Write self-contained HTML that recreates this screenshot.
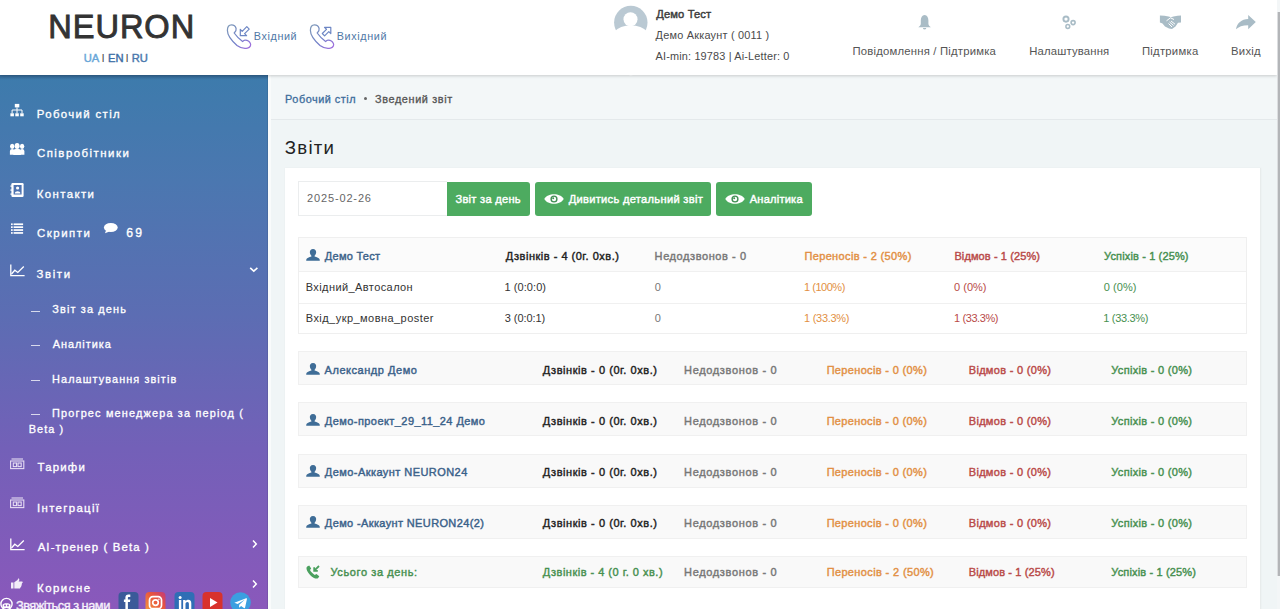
<!DOCTYPE html>
<html><head><meta charset="utf-8"><title>NEURON</title><style>
*{box-sizing:border-box;margin:0;padding:0}
html,body{width:1280px;height:609px;overflow:hidden}
body{position:relative;background:#f0f5f6;font-family:"Liberation Sans",sans-serif}
.t{position:absolute;white-space:nowrap}
.a{position:absolute}
svg{position:absolute;overflow:visible}
</style></head><body>
<div class="a" style="left:271px;top:75px;width:1007px;height:45px;background:#f3f7f8;border-bottom:1px solid #e4e9eb"></div>
<div class="a" style="left:285px;top:168px;width:976px;height:460px;background:#fff;border-right:1px solid #e8ecec;box-shadow:0 0 2px rgba(0,0,0,.04)"></div>
<div class="a" style="left:298px;top:181px;width:149px;height:35px;background:#fff;border:1px solid #ebedee;border-right:none"></div>
<div class="a" style="left:447px;top:181.5px;width:83px;height:34.5px;background:#4dab60;border-radius:0 3px 3px 0"></div>
<div class="a" style="left:534.5px;top:181.5px;width:176.5px;height:34.5px;background:#4dab60;border-radius:3px"></div>
<div class="a" style="left:715.5px;top:181.5px;width:96px;height:34.5px;background:#4dab60;border-radius:3px"></div>
<svg style="left:544px;top:192.5px" width="20" height="12" viewBox="0 0 20 12"><path d="M0.3 6 C3.5 -0.3 16.5 -0.3 19.7 6 C16.5 12.3 3.5 12.3 0.3 6 Z" fill="#fff"/><circle cx="10" cy="6" r="3.6" fill="#3f8f52"/><circle cx="10" cy="6" r="2.2" fill="#fff"/><circle cx="9.2" cy="5.2" r="1" fill="#3f8f52"/></svg>
<svg style="left:724.5px;top:192.5px" width="20" height="12" viewBox="0 0 20 12"><path d="M0.3 6 C3.5 -0.3 16.5 -0.3 19.7 6 C16.5 12.3 3.5 12.3 0.3 6 Z" fill="#fff"/><circle cx="10" cy="6" r="3.6" fill="#3f8f52"/><circle cx="10" cy="6" r="2.2" fill="#fff"/><circle cx="9.2" cy="5.2" r="1" fill="#3f8f52"/></svg>
<div class="a" style="left:298px;top:237px;width:949px;height:97px;background:#fff;border:1px solid #efefef"></div>
<div class="a" style="left:299px;top:238px;width:947px;height:34px;background:#fbfbfb;border-bottom:1px solid #f0f0f0"></div>
<div class="a" style="left:299px;top:302.5px;width:947px;height:1px;background:#f0f0f0"></div>
<div class="a" style="left:298px;top:351.3px;width:949px;height:34px;background:#f9f9f9;border:1px solid #f0f0f0"></div>
<div class="a" style="left:298px;top:402.3px;width:949px;height:34px;background:#f9f9f9;border:1px solid #f0f0f0"></div>
<div class="a" style="left:298px;top:453.5px;width:949px;height:34px;background:#f9f9f9;border:1px solid #f0f0f0"></div>
<div class="a" style="left:298px;top:504.6px;width:949px;height:34px;background:#f9f9f9;border:1px solid #f0f0f0"></div>
<div class="a" style="left:298px;top:556px;width:949px;height:32px;background:#f9f9f9;border:1px solid #f0f0f0"></div>
<svg style="left:306px;top:249.2px" width="14" height="12" viewBox="0 0 14 12"><path d="M7 0 C4.6 0 3.6 1.8 3.9 3.8 C4.1 5.2 4.8 6.3 5.4 6.8 L5.4 7.5 C3.2 8.2 0.6 9.2 0.3 10.6 L0.2 11.8 L13.8 11.8 L13.7 10.6 C13.4 9.2 10.8 8.2 8.6 7.5 L8.6 6.8 C9.2 6.3 9.9 5.2 10.1 3.8 C10.4 1.8 9.4 0 7 0 Z" fill="#3f6d97"/></svg>
<svg style="left:306px;top:362.8px" width="14" height="12" viewBox="0 0 14 12"><path d="M7 0 C4.6 0 3.6 1.8 3.9 3.8 C4.1 5.2 4.8 6.3 5.4 6.8 L5.4 7.5 C3.2 8.2 0.6 9.2 0.3 10.6 L0.2 11.8 L13.8 11.8 L13.7 10.6 C13.4 9.2 10.8 8.2 8.6 7.5 L8.6 6.8 C9.2 6.3 9.9 5.2 10.1 3.8 C10.4 1.8 9.4 0 7 0 Z" fill="#3f6d97"/></svg>
<svg style="left:306px;top:413.8px" width="14" height="12" viewBox="0 0 14 12"><path d="M7 0 C4.6 0 3.6 1.8 3.9 3.8 C4.1 5.2 4.8 6.3 5.4 6.8 L5.4 7.5 C3.2 8.2 0.6 9.2 0.3 10.6 L0.2 11.8 L13.8 11.8 L13.7 10.6 C13.4 9.2 10.8 8.2 8.6 7.5 L8.6 6.8 C9.2 6.3 9.9 5.2 10.1 3.8 C10.4 1.8 9.4 0 7 0 Z" fill="#3f6d97"/></svg>
<svg style="left:306px;top:465.0px" width="14" height="12" viewBox="0 0 14 12"><path d="M7 0 C4.6 0 3.6 1.8 3.9 3.8 C4.1 5.2 4.8 6.3 5.4 6.8 L5.4 7.5 C3.2 8.2 0.6 9.2 0.3 10.6 L0.2 11.8 L13.8 11.8 L13.7 10.6 C13.4 9.2 10.8 8.2 8.6 7.5 L8.6 6.8 C9.2 6.3 9.9 5.2 10.1 3.8 C10.4 1.8 9.4 0 7 0 Z" fill="#3f6d97"/></svg>
<svg style="left:306px;top:516.1px" width="14" height="12" viewBox="0 0 14 12"><path d="M7 0 C4.6 0 3.6 1.8 3.9 3.8 C4.1 5.2 4.8 6.3 5.4 6.8 L5.4 7.5 C3.2 8.2 0.6 9.2 0.3 10.6 L0.2 11.8 L13.8 11.8 L13.7 10.6 C13.4 9.2 10.8 8.2 8.6 7.5 L8.6 6.8 C9.2 6.3 9.9 5.2 10.1 3.8 C10.4 1.8 9.4 0 7 0 Z" fill="#3f6d97"/></svg>
<svg style="left:305.8px;top:564.5px" width="14" height="14" viewBox="0 0 14 14"><path d="M3.2 0.6 L1.2 1.6 C0.2 2.4 0.3 4.2 1.2 6 C2.6 8.8 5.2 11.6 8 13 C9.8 13.8 11.4 13.8 12.2 13 L13.3 11.2 L10.4 8.9 L8.8 10 C7.2 9.3 4.8 6.8 4 5.1 L5.2 3.5 Z" fill="#4aa05e"/><path d="M13 1 L8.6 5.4 M8.2 2.2 L8.2 5.8 L11.8 5.8" stroke="#4aa05e" stroke-width="1.8" fill="none"/></svg>
<div class="a" style="left:0;top:75px;width:268px;height:534px;background:linear-gradient(180deg,#3d7bac 0%,#4b77b0 20%,#5c6db3 45%,#7360b8 70%,#8a58bb 100%)"></div>
<div class="a" style="left:268px;top:75px;width:3px;height:534px;background:#f9fbfb"></div>
<div class="a" style="left:0;top:75px;width:268px;height:5px;background:linear-gradient(180deg,rgba(20,40,70,.28),rgba(20,40,70,0))"></div>
<div class="a" style="left:266.5px;top:75px;width:1.5px;height:534px;background:rgba(20,30,60,.12)"></div>
<div class="a" style="left:0;top:0;width:1277px;height:75px;background:#fff;box-shadow:0 1px 3px rgba(0,0,0,.18)"></div>
<div class="a" style="left:1277px;top:0;width:3px;height:609px;background:#f3f6f7"></div>
<div class="a" style="left:1277.4px;top:12px;width:0.8px;height:564px;background:#dcdee0"></div>
<div class="a" style="left:1278px;top:12px;width:2px;height:564px;background:#b3b5b8"></div>
<svg style="left:222px;top:20px" width="34" height="32" viewBox="0 0 34 32"><defs><linearGradient id="g222" x1="0" y1="0" x2="1" y2="1"><stop offset="0" stop-color="#7f9ab8"/><stop offset="0.55" stop-color="#6f7fc8"/><stop offset="1" stop-color="#a56ee0"/></linearGradient></defs><path d="M9.5 4.8 C7 4.8 5.4 7 5.4 10.5 C5.4 15 10 21 15 25.5 C19 28.5 23 28.6 25.5 28.1 C28.4 27.5 29.1 25 28.4 23.4 C27.5 21.5 25 20 23 20.1 C22 20.2 21.2 20.9 20.6 21.5 C17 19 14.3 16 12.2 13 C13.2 12 14.6 10.5 14.1 8.5 C13.6 6.5 11.6 4.8 9.5 4.8 Z" fill="none" stroke="url(#g222)" stroke-width="1.25"/><path d="M18.3 9.3 L18.3 15.7 L24.6 15.7 L22.6 13.7 L27.2 9.1 L24.8 6.7 L20.2 11.3 Z" fill="none" stroke="#6d86c4" stroke-width="1.2" stroke-linejoin="round"/></svg>
<svg style="left:305px;top:20px" width="34" height="32" viewBox="0 0 34 32"><defs><linearGradient id="g305" x1="0" y1="0" x2="1" y2="1"><stop offset="0" stop-color="#7f9ab8"/><stop offset="0.55" stop-color="#6f7fc8"/><stop offset="1" stop-color="#a56ee0"/></linearGradient></defs><path d="M9.5 4.8 C7 4.8 5.4 7 5.4 10.5 C5.4 15 10 21 15 25.5 C19 28.5 23 28.6 25.5 28.1 C28.4 27.5 29.1 25 28.4 23.4 C27.5 21.5 25 20 23 20.1 C22 20.2 21.2 20.9 20.6 21.5 C17 19 14.3 16 12.2 13 C13.2 12 14.6 10.5 14.1 8.5 C13.6 6.5 11.6 4.8 9.5 4.8 Z" fill="none" stroke="url(#g305)" stroke-width="1.25"/><path d="M25.8 7.4 L25.8 13.6 L23.8 11.6 L19.6 15.8 L17.3 13.5 L21.5 9.3 L19.5 7.4 Z" fill="none" stroke="#6d86c4" stroke-width="1.2" stroke-linejoin="round"/></svg>
<svg style="left:608px;top:0px" width="48" height="44" viewBox="0 0 48 44"><defs><clipPath id="av"><circle cx="22.8" cy="22.5" r="16.7"/></clipPath></defs><circle cx="22.8" cy="22.5" r="16.7" fill="#bac9d3"/><circle cx="22.5" cy="19.3" r="7" fill="#fff"/><circle cx="22.8" cy="50.2" r="25" fill="#fff"/></svg>
<svg style="left:912px;top:10px" width="28" height="24" viewBox="0 0 28 24"><path d="M12.6 4.9 C10 5.3 8.8 7.5 8.8 10.5 L8.8 13.8 C8.8 15.4 7.6 16.4 6.3 17.3 L18.9 17.3 C17.6 16.4 16.4 15.4 16.4 13.8 L16.4 10.5 C16.4 7.5 15.2 5.3 12.6 4.9 Z" fill="#a9bcc6"/><path d="M11 18 C11 19.2 11.8 19.4 12.6 19.4 C13.4 19.4 14.2 19.2 14.2 18 Z" fill="#a9bcc6"/></svg>
<svg style="left:1056px;top:10px" width="28" height="24" viewBox="0 0 28 24"><circle cx="10" cy="9.1" r="2.6" fill="none" stroke="#a9bcc6" stroke-width="1.9"/><circle cx="17.1" cy="12.6" r="2" fill="none" stroke="#a9bcc6" stroke-width="1.6"/><circle cx="11.8" cy="16.5" r="1.9" fill="none" stroke="#a9bcc6" stroke-width="1.5"/></svg>
<svg style="left:1156px;top:10px" width="30" height="24" viewBox="0 0 30 24"><path d="M3.9 5.5 L8.5 5.8 L12.5 6.4 L15 7.2 L17.5 6.4 L21.5 5.8 L25 5.5 L25 12.5 L22 12.8 L19.5 16.5 L16 18.9 L13 18.5 L9 16.5 L6.5 13.5 L3.9 12.5 Z" fill="#a9bcc6"/><path d="M10.5 10.8 L14.5 7.8 L18 9.5 M13.5 12 L17.5 15.5 M12.5 13.5 L16 17 M15 11 L19 14.2" stroke="#fff" stroke-width="1" fill="none"/></svg>
<svg style="left:1232px;top:10px" width="30" height="24" viewBox="0 0 30 24"><path d="M16.2 4.9 L23.8 12 L16.2 19.3 L16.2 15.2 C10.5 15.2 6.5 16.8 4 19.3 C5 13 9.5 9.3 16.2 9 Z" fill="#a9bcc6"/></svg>
<svg style="left:0;top:95px" width="30" height="30" viewBox="0 0 30 30"><rect x="14.8" y="8.9" width="4.5" height="3.5" fill="#ffffff"/><path d="M17 12.4 L17 15 M12.1 18.3 L12.1 15 L22 15 L22 18.3 M17 15 L17 18.3" stroke="#ffffff" stroke-width="1" fill="none"/><rect x="10.4" y="18.3" width="3.5" height="3" fill="#ffffff"/><rect x="15.3" y="18.3" width="3.5" height="3" fill="#ffffff"/><rect x="20.2" y="18.3" width="3.5" height="3" fill="#ffffff"/></svg>
<svg style="left:0;top:135px" width="30" height="30" viewBox="0 0 30 30"><g fill="#ffffff"><ellipse cx="12.2" cy="11.3" rx="2.2" ry="2.6"/><ellipse cx="22.1" cy="11.3" rx="2.2" ry="2.6"/><path d="M9.9 19.8 L9.9 16.5 C9.9 14.8 11 14 12.2 14 C13.4 14 14.5 14.8 14.5 16.5 L14.5 19.8 Z"/><path d="M19.8 19.8 L19.8 16.5 C19.8 14.8 20.9 14 22.1 14 C23.3 14 24.4 14.8 24.4 16.5 L24.4 19.8 Z"/><ellipse cx="17.1" cy="11" rx="2.5" ry="2.9"/><path d="M13.3 20 L13.3 16.5 C13.3 14.5 15 13.8 17.1 13.8 C19.2 13.8 20.9 14.5 20.9 16.5 L20.9 20 Z"/></g></svg>
<svg style="left:0;top:175px" width="30" height="30" viewBox="0 0 30 30"><rect x="11.4" y="8" width="12.2" height="14" rx="1.2" fill="#ffffff"/><rect x="13.6" y="10" width="8" height="9.5" fill="#4d73b1"/><circle cx="17.6" cy="13" r="1.6" fill="#ffffff"/><path d="M14.8 18.6 C14.8 15.6 20.4 15.6 20.4 18.6 Z" fill="#ffffff"/><rect x="10.4" y="10.5" width="2" height="1.2" fill="#ffffff"/><rect x="10.4" y="14.5" width="2" height="1.2" fill="#ffffff"/><rect x="10.4" y="18.5" width="2" height="1.2" fill="#ffffff"/></svg>
<svg style="left:0;top:215px" width="30" height="30" viewBox="0 0 30 30"><g fill="#ffffff"><rect x="11" y="8.4" width="1.7" height="1.7"/><rect x="13.6" y="8.4" width="9.5" height="1.7"/><rect x="11" y="11.3" width="1.7" height="1.7"/><rect x="13.6" y="11.3" width="9.5" height="1.7"/><rect x="11" y="14.2" width="1.7" height="1.7"/><rect x="13.6" y="14.2" width="9.5" height="1.7"/><rect x="11" y="17.1" width="1.7" height="1.7"/><rect x="13.6" y="17.1" width="9.5" height="1.7"/></g></svg>
<svg style="left:100px;top:220px" width="20" height="16" viewBox="0 0 20 16"><ellipse cx="10.8" cy="7.5" rx="6.9" ry="4.6" fill="#ffffff"/><path d="M6 10.5 L5 13.2 L9.5 11.5 Z" fill="#ffffff"/></svg>
<svg style="left:9.5px;top:263.5px" width="20" height="16" viewBox="0 0 20 16"><path d="M0.8 0.5 L0.8 11.6 L14.6 11.6" stroke="#ffffff" stroke-width="1.3" fill="none"/><path d="M1.5 10 L4.8 6.2 L7.8 8.5 L13.8 2.5" stroke="#ffffff" stroke-width="1.3" fill="none"/></svg>
<svg style="left:9.5px;top:537.5px" width="20" height="16" viewBox="0 0 20 16"><path d="M0.8 0.5 L0.8 11.6 L14.6 11.6" stroke="#ffffff" stroke-width="1.3" fill="none"/><path d="M1.5 10 L4.8 6.2 L7.8 8.5 L13.8 2.5" stroke="#ffffff" stroke-width="1.3" fill="none"/></svg>
<svg style="left:248px;top:265px" width="12" height="10" viewBox="0 0 12 10"><path d="M2.2 2.8 L5.8 6.2 L9.4 2.8" stroke="#ffffff" stroke-width="1.6" fill="none"/></svg>
<svg style="left:250px;top:537.5px" width="10" height="12" viewBox="0 0 10 12"><path d="M3 2.5 L6.3 6 L3 9.5" stroke="#ffffff" stroke-width="1.5" fill="none"/></svg>
<svg style="left:250px;top:577.5px" width="10" height="12" viewBox="0 0 10 12"><path d="M3 2.5 L6.3 6 L3 9.5" stroke="#ffffff" stroke-width="1.5" fill="none"/></svg>
<div class="a" style="left:31px;top:310.5px;width:9px;height:1px;background:rgba(255,255,255,.75)"></div>
<div class="a" style="left:31px;top:344.5px;width:9px;height:1px;background:rgba(255,255,255,.75)"></div>
<div class="a" style="left:31px;top:379.5px;width:9px;height:1px;background:rgba(255,255,255,.75)"></div>
<div class="a" style="left:31px;top:413.5px;width:9px;height:1px;background:rgba(255,255,255,.75)"></div>
<svg style="left:10px;top:457.5px" width="16" height="12" viewBox="0 0 16 12"><g fill="none" stroke="#e6dcf3" stroke-width="1.1"><rect x="0.6" y="3" width="13.2" height="7.6"/><path d="M1.5 1 L13 1"/><rect x="3.3" y="5" width="3.2" height="3.6"/><rect x="8" y="5" width="3.2" height="3.6"/></g></svg>
<svg style="left:10px;top:496.8px" width="16" height="12" viewBox="0 0 16 12"><g fill="none" stroke="#e6dcf3" stroke-width="1.1"><rect x="0.6" y="3" width="13.2" height="7.6"/><path d="M1.5 1 L13 1"/><rect x="3.3" y="5" width="3.2" height="3.6"/><rect x="8" y="5" width="3.2" height="3.6"/></g></svg>
<svg style="left:10px;top:578px" width="14" height="12" viewBox="0 0 14 12"><path d="M1 4.5 L3.5 4.5 L3.5 10.5 L1 10.5 Z M4.3 4.3 L7.5 2 L8.2 0.6 C9 0.4 9.6 1 9.2 2.4 L8.6 3.6 L12 3.6 C13 3.8 13 5 12 5.2 L11.5 5.2 C12.3 5.5 12.2 6.5 11.4 6.6 C12 7 11.8 8 11 8 C11.5 8.4 11.2 9.3 10.5 9.3 L10.3 9.3 C10.5 9.8 10.2 10.6 9.5 10.6 L4.3 10.6 Z" fill="#f2ecf8"/></svg>
<svg style="left:0;top:596px" width="14" height="14" viewBox="0 0 14 14"><circle cx="6.5" cy="8" r="5.6" fill="none" stroke="#fff" stroke-width="1.4"/><path d="M2.5 9 C2.5 6.8 10.5 6.8 10.5 9 L10.5 12 L2.5 12 Z" fill="#fff"/><circle cx="5" cy="9.5" r="0.9" fill="#8a55bd"/><circle cx="8" cy="9.5" r="0.9" fill="#8a55bd"/></svg>
<svg style="left:117.8px;top:592px" width="21" height="21" viewBox="0 0 20 21"><rect x="0" y="0" width="20" height="21" rx="4" fill="#3b5a99"/><path d="M11.8 5 L10.2 5 C9.6 5 9.4 5.4 9.4 6 L9.4 7.6 L11.8 7.6 L11.5 10 L9.4 10 L9.4 20 L6.9 20 L6.9 10 L5.4 10 L5.4 7.6 L6.9 7.6 L6.9 5.6 C6.9 3.6 8 2.6 9.8 2.6 L11.8 2.6 Z" fill="#fff"/></svg>
<svg style="left:145.3px;top:592px" width="21" height="21" viewBox="0 0 20 21"><defs><linearGradient id="ig" x1="0" y1="1" x2="1" y2="0"><stop offset="0" stop-color="#f6a03c"/><stop offset="0.6" stop-color="#e8543f"/><stop offset="1" stop-color="#c33a7a"/></linearGradient></defs><rect x="0" y="0" width="20" height="21" rx="4" fill="url(#ig)"/><rect x="4" y="4.6" width="12" height="12" rx="3.4" fill="none" stroke="#fff" stroke-width="1.7"/><circle cx="10" cy="10.6" r="2.8" fill="none" stroke="#fff" stroke-width="1.7"/><circle cx="13.4" cy="7.2" r="0.8" fill="#fff"/></svg>
<svg style="left:173.6px;top:592px" width="21" height="21" viewBox="0 0 20 21"><rect x="0" y="0" width="20" height="21" rx="4" fill="#2f6eb5"/><rect x="4.4" y="8" width="2.4" height="9" fill="#fff"/><circle cx="5.6" cy="5.4" r="1.5" fill="#fff"/><path d="M8.6 8 L11 8 L11 9.3 C11.6 8.3 12.6 7.8 13.8 7.8 C15.8 7.8 16.8 9 16.8 11.4 L16.8 17 L14.4 17 L14.4 12 C14.4 10.8 14 10 12.9 10 C11.8 10 11 10.8 11 12 L11 17 L8.6 17 Z" fill="#fff"/></svg>
<svg style="left:201.7px;top:592px" width="21" height="21" viewBox="0 0 20 21"><rect x="0" y="0" width="20" height="21" rx="4" fill="#d8322c"/><path d="M7.5 6 L15 10.5 L7.5 15 Z" fill="#fff"/></svg>
<svg style="left:229.8px;top:592px" width="21" height="21" viewBox="0 0 20 21"><circle cx="10" cy="10.5" r="10.3" fill="#3b9fe0"/><path d="M4.5 10.4 L15.6 6.2 C16.2 6 16.6 6.4 16.4 7.2 L14.6 15.6 C14.4 16.2 14 16.4 13.4 16 L10.6 14 L9.2 15.3 C9 15.5 8.8 15.6 8.5 15.6 L8.7 12.7 L13.9 8 C14.1 7.8 13.9 7.7 13.6 7.9 L7.2 11.9 L4.5 11 C3.9 10.8 3.9 10.6 4.5 10.4 Z" fill="#fff"/></svg>
<div class="t" style="left:48.32px;top:10.95px;font-size:32.600px;line-height:32.600px;letter-spacing:0.936px;font-weight:normal;-webkit-text-stroke:0.91px currentColor;color:#333">NEURON</div>
<div class="t" style="left:83.77px;top:52.87px;font-size:11.200px;line-height:11.200px;letter-spacing:-0.004px;font-weight:normal;-webkit-text-stroke:0.43px currentColor;color:#68a6d8">UA</div>
<div class="t" style="left:101.57px;top:52.87px;font-size:11.500px;line-height:11.500px;letter-spacing:0.000px;font-weight:normal;color:#555">I</div>
<div class="t" style="left:107.92px;top:52.87px;font-size:11.200px;line-height:11.200px;letter-spacing:0.161px;font-weight:normal;-webkit-text-stroke:0.43px currentColor;color:#3c6ea6">EN</div>
<div class="t" style="left:125.51px;top:52.87px;font-size:11.500px;line-height:11.500px;letter-spacing:0.000px;font-weight:normal;color:#555">I</div>
<div class="t" style="left:131.80px;top:52.87px;font-size:11.200px;line-height:11.200px;letter-spacing:-0.202px;font-weight:normal;-webkit-text-stroke:0.43px currentColor;color:#4a78ad">RU</div>
<div class="t" style="left:253.81px;top:31.33px;font-size:10.800px;line-height:10.800px;letter-spacing:0.601px;font-weight:normal;color:#4f78a6">Вхідний</div>
<div class="t" style="left:336.81px;top:31.33px;font-size:10.800px;line-height:10.800px;letter-spacing:0.621px;font-weight:normal;color:#4f78a6">Вихідний</div>
<div class="t" style="left:656.31px;top:8.86px;font-size:11.200px;line-height:11.200px;letter-spacing:0.104px;font-weight:normal;-webkit-text-stroke:0.43px currentColor;color:#3a3a3a">Демо Тест</div>
<div class="t" style="left:655.58px;top:29.50px;font-size:10.900px;line-height:10.900px;letter-spacing:0.225px;font-weight:normal;color:#4a4a4a">Демо Аккаунт ( 0011 )</div>
<div class="t" style="left:655.57px;top:50.76px;font-size:10.900px;line-height:10.900px;letter-spacing:0.165px;font-weight:normal;color:#4a4a4a">AI-min: 19783 | Ai-Letter: 0</div>
<div class="t" style="left:852.55px;top:45.59px;font-size:11.300px;line-height:11.300px;letter-spacing:0.202px;font-weight:normal;color:#555">Повідомлення / Підтримка</div>
<div class="t" style="left:1029.16px;top:46.12px;font-size:11.300px;line-height:11.300px;letter-spacing:0.175px;font-weight:normal;color:#555">Налаштування</div>
<div class="t" style="left:1141.91px;top:45.82px;font-size:11.300px;line-height:11.300px;letter-spacing:0.257px;font-weight:normal;color:#555">Підтримка</div>
<div class="t" style="left:1231.11px;top:45.82px;font-size:11.300px;line-height:11.300px;letter-spacing:0.212px;font-weight:normal;color:#555">Вихід</div>
<div class="t" style="left:36.74px;top:109.32px;font-size:11.400px;line-height:11.400px;letter-spacing:1.370px;font-weight:normal;-webkit-text-stroke:0.32px currentColor;color:#ffffff">Робочий стіл</div>
<div class="t" style="left:36.96px;top:148.03px;font-size:11.400px;line-height:11.400px;letter-spacing:1.496px;font-weight:normal;-webkit-text-stroke:0.32px currentColor;color:#ffffff">Співробітники</div>
<div class="t" style="left:36.68px;top:188.79px;font-size:11.400px;line-height:11.400px;letter-spacing:1.410px;font-weight:normal;-webkit-text-stroke:0.32px currentColor;color:#ffffff">Контакти</div>
<div class="t" style="left:36.96px;top:227.66px;font-size:11.400px;line-height:11.400px;letter-spacing:1.561px;font-weight:normal;-webkit-text-stroke:0.32px currentColor;color:#ffffff">Скрипти</div>
<div class="t" style="left:126.34px;top:227.43px;font-size:12.200px;line-height:12.200px;letter-spacing:2.196px;font-weight:normal;-webkit-text-stroke:0.34px currentColor;color:#ffffff">69</div>
<div class="t" style="left:36.50px;top:268.98px;font-size:11.400px;line-height:11.400px;letter-spacing:1.636px;font-weight:normal;-webkit-text-stroke:0.32px currentColor;color:#ffffff">Звіти</div>
<div class="t" style="left:52.36px;top:304.08px;font-size:10.900px;line-height:10.900px;letter-spacing:1.141px;font-weight:normal;-webkit-text-stroke:0.31px currentColor;color:#ffffff">Звіт за день</div>
<div class="t" style="left:52.72px;top:338.83px;font-size:10.900px;line-height:10.900px;letter-spacing:0.972px;font-weight:normal;-webkit-text-stroke:0.31px currentColor;color:#ffffff">Аналітика</div>
<div class="t" style="left:52.07px;top:373.53px;font-size:10.900px;line-height:10.900px;letter-spacing:1.082px;font-weight:normal;-webkit-text-stroke:0.31px currentColor;color:#ffffff">Налаштування звітів</div>
<div class="t" style="left:52.05px;top:407.54px;font-size:10.900px;line-height:10.900px;letter-spacing:1.170px;font-weight:normal;-webkit-text-stroke:0.31px currentColor;color:#ffffff">Прогрес менеджера за період (</div>
<div class="t" style="left:28.75px;top:423.78px;font-size:10.900px;line-height:10.900px;letter-spacing:1.067px;font-weight:normal;-webkit-text-stroke:0.31px currentColor;color:#ffffff">Beta )</div>
<div class="t" style="left:37.60px;top:462.05px;font-size:11.400px;line-height:11.400px;letter-spacing:1.191px;font-weight:normal;-webkit-text-stroke:0.32px currentColor;color:#ffffff">Тарифи</div>
<div class="t" style="left:37.11px;top:503.07px;font-size:11.400px;line-height:11.400px;letter-spacing:1.320px;font-weight:normal;-webkit-text-stroke:0.32px currentColor;color:#ffffff">Інтеграції</div>
<div class="t" style="left:37.65px;top:542.12px;font-size:11.400px;line-height:11.400px;letter-spacing:1.131px;font-weight:normal;-webkit-text-stroke:0.32px currentColor;color:#ffffff">AI-тренер ( Beta )</div>
<div class="t" style="left:36.96px;top:583.18px;font-size:11.400px;line-height:11.400px;letter-spacing:1.537px;font-weight:normal;-webkit-text-stroke:0.32px currentColor;color:#ffffff">Корисне</div>
<div class="t" style="left:15.95px;top:600.48px;font-size:12.800px;line-height:12.800px;letter-spacing:-0.489px;font-weight:normal;-webkit-text-stroke:0.36px currentColor;color:#f6f0fb">Звяжіться з нами</div>
<div class="t" style="left:285.08px;top:93.59px;font-size:10.900px;line-height:10.900px;letter-spacing:0.498px;font-weight:normal;-webkit-text-stroke:0.31px currentColor;color:#3d6d9c">Робочий стіл</div>
<div class="t" style="left:375.03px;top:94.41px;font-size:10.900px;line-height:10.900px;letter-spacing:0.610px;font-weight:normal;-webkit-text-stroke:0.31px currentColor;color:#555">Зведений звіт</div>
<div class="t" style="left:284.80px;top:139.28px;font-size:18.600px;line-height:18.600px;letter-spacing:1.253px;font-weight:normal;color:#222">Звіти</div>
<div class="t" style="left:307.09px;top:193.43px;font-size:11.000px;line-height:11.000px;letter-spacing:0.846px;font-weight:normal;color:#666">2025-02-26</div>
<div class="t" style="left:455.41px;top:194.35px;font-size:11.100px;line-height:11.100px;letter-spacing:0.282px;font-weight:normal;-webkit-text-stroke:0.42px currentColor;color:#fff">Звіт за день</div>
<div class="t" style="left:568.67px;top:194.20px;font-size:11.100px;line-height:11.100px;letter-spacing:0.310px;font-weight:normal;-webkit-text-stroke:0.42px currentColor;color:#fff">Дивитись детальний звіт</div>
<div class="t" style="left:749.75px;top:194.02px;font-size:11.100px;line-height:11.100px;letter-spacing:0.204px;font-weight:normal;-webkit-text-stroke:0.42px currentColor;color:#fff">Аналітика</div>
<div class="t" style="left:324.83px;top:251.05px;font-size:11.000px;line-height:11.000px;letter-spacing:0.255px;font-weight:normal;-webkit-text-stroke:0.42px currentColor;color:#3a6189">Демо Тест</div>
<div class="t" style="left:505.75px;top:251.19px;font-size:11.000px;line-height:11.000px;letter-spacing:0.504px;font-weight:normal;-webkit-text-stroke:0.42px currentColor;color:#222">Дзвінків - 4 (0г. 0хв.)</div>
<div class="t" style="left:654.61px;top:251.05px;font-size:11.000px;line-height:11.000px;letter-spacing:0.583px;font-weight:normal;-webkit-text-stroke:0.42px currentColor;color:#777">Недодзвонов - 0</div>
<div class="t" style="left:804.46px;top:251.19px;font-size:11.000px;line-height:11.000px;letter-spacing:0.353px;font-weight:normal;-webkit-text-stroke:0.42px currentColor;color:#e29044">Переносів - 2 (50%)</div>
<div class="t" style="left:954.42px;top:251.19px;font-size:11.000px;line-height:11.000px;letter-spacing:0.103px;font-weight:normal;-webkit-text-stroke:0.42px currentColor;color:#b94a48">Відмов - 1 (25%)</div>
<div class="t" style="left:1104.04px;top:251.14px;font-size:11.000px;line-height:11.000px;letter-spacing:0.141px;font-weight:normal;-webkit-text-stroke:0.42px currentColor;color:#479050">Успіхів - 1 (25%)</div>
<div class="t" style="left:305.74px;top:282.11px;font-size:11.000px;line-height:11.000px;letter-spacing:0.411px;font-weight:normal;color:#333">Вхідний_Автосалон</div>
<div class="t" style="left:504.47px;top:282.15px;font-size:11.000px;line-height:11.000px;letter-spacing:0.068px;font-weight:normal;color:#333">1 (0:0:0)</div>
<div class="t" style="left:654.84px;top:282.18px;font-size:11.000px;line-height:11.000px;letter-spacing:0.000px;font-weight:normal;color:#777">0</div>
<div class="t" style="left:804.07px;top:282.00px;font-size:11.000px;line-height:11.000px;letter-spacing:-0.482px;font-weight:normal;color:#e29044">1 (100%)</div>
<div class="t" style="left:954.12px;top:281.96px;font-size:11.000px;line-height:11.000px;letter-spacing:-0.002px;font-weight:normal;color:#b94a48">0 (0%)</div>
<div class="t" style="left:1103.84px;top:282.18px;font-size:11.000px;line-height:11.000px;letter-spacing:0.050px;font-weight:normal;color:#479050">0 (0%)</div>
<div class="t" style="left:305.74px;top:313.29px;font-size:11.000px;line-height:11.000px;letter-spacing:0.452px;font-weight:normal;color:#333">Вхід_укр_мовна_poster</div>
<div class="t" style="left:504.82px;top:313.35px;font-size:11.000px;line-height:11.000px;letter-spacing:-0.069px;font-weight:normal;color:#333">3 (0:0:1)</div>
<div class="t" style="left:654.81px;top:313.36px;font-size:11.000px;line-height:11.000px;letter-spacing:0.000px;font-weight:normal;color:#777">0</div>
<div class="t" style="left:804.06px;top:313.17px;font-size:11.000px;line-height:11.000px;letter-spacing:-0.281px;font-weight:normal;color:#e29044">1 (33.3%)</div>
<div class="t" style="left:954.06px;top:313.17px;font-size:11.000px;line-height:11.000px;letter-spacing:-0.406px;font-weight:normal;color:#b94a48">1 (33.3%)</div>
<div class="t" style="left:1103.26px;top:313.23px;font-size:11.000px;line-height:11.000px;letter-spacing:-0.306px;font-weight:normal;color:#479050">1 (33.3%)</div>
<div class="t" style="left:324.59px;top:364.91px;font-size:11.000px;line-height:11.000px;letter-spacing:0.534px;font-weight:normal;-webkit-text-stroke:0.42px currentColor;color:#3a6189">Александр Демо</div>
<div class="t" style="left:542.76px;top:364.78px;font-size:11.000px;line-height:11.000px;letter-spacing:0.554px;font-weight:normal;-webkit-text-stroke:0.42px currentColor;color:#222">Дзвінків - 0 (0г. 0хв.)</div>
<div class="t" style="left:684.04px;top:364.90px;font-size:11.000px;line-height:11.000px;letter-spacing:0.657px;font-weight:normal;-webkit-text-stroke:0.42px currentColor;color:#777">Недодзвонов - 0</div>
<div class="t" style="left:826.63px;top:364.75px;font-size:11.000px;line-height:11.000px;letter-spacing:0.340px;font-weight:normal;-webkit-text-stroke:0.42px currentColor;color:#e29044">Переносів - 0 (0%)</div>
<div class="t" style="left:968.74px;top:364.76px;font-size:11.000px;line-height:11.000px;letter-spacing:0.309px;font-weight:normal;-webkit-text-stroke:0.42px currentColor;color:#b94a48">Відмов - 0 (0%)</div>
<div class="t" style="left:1111.32px;top:365.00px;font-size:11.000px;line-height:11.000px;letter-spacing:0.302px;font-weight:normal;-webkit-text-stroke:0.42px currentColor;color:#479050">Успіхів - 0 (0%)</div>
<div class="t" style="left:324.83px;top:415.75px;font-size:11.000px;line-height:11.000px;letter-spacing:0.433px;font-weight:normal;-webkit-text-stroke:0.42px currentColor;color:#3a6189">Демо-проект_29_11_24 Демо</div>
<div class="t" style="left:542.76px;top:415.78px;font-size:11.000px;line-height:11.000px;letter-spacing:0.554px;font-weight:normal;-webkit-text-stroke:0.42px currentColor;color:#222">Дзвінків - 0 (0г. 0хв.)</div>
<div class="t" style="left:684.04px;top:415.90px;font-size:11.000px;line-height:11.000px;letter-spacing:0.657px;font-weight:normal;-webkit-text-stroke:0.42px currentColor;color:#777">Недодзвонов - 0</div>
<div class="t" style="left:826.63px;top:415.75px;font-size:11.000px;line-height:11.000px;letter-spacing:0.340px;font-weight:normal;-webkit-text-stroke:0.42px currentColor;color:#e29044">Переносів - 0 (0%)</div>
<div class="t" style="left:968.74px;top:415.76px;font-size:11.000px;line-height:11.000px;letter-spacing:0.309px;font-weight:normal;-webkit-text-stroke:0.42px currentColor;color:#b94a48">Відмов - 0 (0%)</div>
<div class="t" style="left:1111.32px;top:416.00px;font-size:11.000px;line-height:11.000px;letter-spacing:0.302px;font-weight:normal;-webkit-text-stroke:0.42px currentColor;color:#479050">Успіхів - 0 (0%)</div>
<div class="t" style="left:324.83px;top:466.55px;font-size:11.000px;line-height:11.000px;letter-spacing:0.437px;font-weight:normal;-webkit-text-stroke:0.42px currentColor;color:#3a6189">Демо-Аккаунт NEURON24</div>
<div class="t" style="left:542.76px;top:466.58px;font-size:11.000px;line-height:11.000px;letter-spacing:0.554px;font-weight:normal;-webkit-text-stroke:0.42px currentColor;color:#222">Дзвінків - 0 (0г. 0хв.)</div>
<div class="t" style="left:684.04px;top:466.70px;font-size:11.000px;line-height:11.000px;letter-spacing:0.657px;font-weight:normal;-webkit-text-stroke:0.42px currentColor;color:#777">Недодзвонов - 0</div>
<div class="t" style="left:826.63px;top:466.55px;font-size:11.000px;line-height:11.000px;letter-spacing:0.340px;font-weight:normal;-webkit-text-stroke:0.42px currentColor;color:#e29044">Переносів - 0 (0%)</div>
<div class="t" style="left:968.74px;top:466.56px;font-size:11.000px;line-height:11.000px;letter-spacing:0.309px;font-weight:normal;-webkit-text-stroke:0.42px currentColor;color:#b94a48">Відмов - 0 (0%)</div>
<div class="t" style="left:1111.32px;top:466.80px;font-size:11.000px;line-height:11.000px;letter-spacing:0.302px;font-weight:normal;-webkit-text-stroke:0.42px currentColor;color:#479050">Успіхів - 0 (0%)</div>
<div class="t" style="left:324.83px;top:518.45px;font-size:11.000px;line-height:11.000px;letter-spacing:0.367px;font-weight:normal;-webkit-text-stroke:0.42px currentColor;color:#3a6189">Демо -Аккаунт NEURON24(2)</div>
<div class="t" style="left:542.76px;top:518.48px;font-size:11.000px;line-height:11.000px;letter-spacing:0.554px;font-weight:normal;-webkit-text-stroke:0.42px currentColor;color:#222">Дзвінків - 0 (0г. 0хв.)</div>
<div class="t" style="left:684.04px;top:517.60px;font-size:11.000px;line-height:11.000px;letter-spacing:0.657px;font-weight:normal;-webkit-text-stroke:0.42px currentColor;color:#777">Недодзвонов - 0</div>
<div class="t" style="left:826.63px;top:518.45px;font-size:11.000px;line-height:11.000px;letter-spacing:0.340px;font-weight:normal;-webkit-text-stroke:0.42px currentColor;color:#e29044">Переносів - 0 (0%)</div>
<div class="t" style="left:968.74px;top:518.46px;font-size:11.000px;line-height:11.000px;letter-spacing:0.309px;font-weight:normal;-webkit-text-stroke:0.42px currentColor;color:#b94a48">Відмов - 0 (0%)</div>
<div class="t" style="left:1111.32px;top:517.70px;font-size:11.000px;line-height:11.000px;letter-spacing:0.302px;font-weight:normal;-webkit-text-stroke:0.42px currentColor;color:#479050">Успіхів - 0 (0%)</div>
<div class="t" style="left:330.52px;top:566.70px;font-size:11.000px;line-height:11.000px;letter-spacing:0.604px;font-weight:normal;-webkit-text-stroke:0.42px currentColor;color:#479050">Усього за день:</div>
<div class="t" style="left:542.76px;top:566.68px;font-size:11.000px;line-height:11.000px;letter-spacing:0.486px;font-weight:normal;-webkit-text-stroke:0.42px currentColor;color:#479050">Дзвінків - 4 (0 г. 0 хв.)</div>
<div class="t" style="left:684.04px;top:566.80px;font-size:11.000px;line-height:11.000px;letter-spacing:0.657px;font-weight:normal;-webkit-text-stroke:0.42px currentColor;color:#777">Недодзвонов - 0</div>
<div class="t" style="left:826.63px;top:566.65px;font-size:11.000px;line-height:11.000px;letter-spacing:0.368px;font-weight:normal;-webkit-text-stroke:0.42px currentColor;color:#e29044">Переносів - 2 (50%)</div>
<div class="t" style="left:968.74px;top:566.66px;font-size:11.000px;line-height:11.000px;letter-spacing:0.121px;font-weight:normal;-webkit-text-stroke:0.42px currentColor;color:#b94a48">Відмов - 1 (25%)</div>
<div class="t" style="left:1111.32px;top:566.90px;font-size:11.000px;line-height:11.000px;letter-spacing:0.146px;font-weight:normal;-webkit-text-stroke:0.42px currentColor;color:#479050">Успіхів - 1 (25%)</div>
<div class="t" style="left:363.5px;top:96.5px;width:3.4px;height:3.4px;border-radius:50%;background:#666"></div>
</body></html>
